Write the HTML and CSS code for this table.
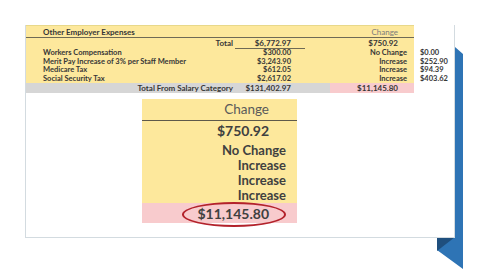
FILE: index.html
```html
<!DOCTYPE html>
<html>
<head>
<meta charset="utf-8">
<link rel="stylesheet" href="styles.css">
</head>
<body>
<div class="page">
  <svg class="ribbon" width="480" height="270" viewBox="0 0 480 270">
    <polygon class="rib-main" points="455,47 463,54 463,269 437,250 437,238 455,238"/>
    <polygon class="rib-dark" points="437,238 455,237 437,251"/>
  </svg>
  <div class="card">
    <div class="top">
      <div class="sheet">
        <div class="row head">
          <span class="lab span3">Other Employer Expenses</span>
          <span class="chg muted">Change</span>
        </div>
        <div class="row total">
          <span class="lab r">Total</span>
          <span class="val ul">$6,772.97</span>
          <span class="gap"></span>
          <span class="chg">$750.92</span>
        </div>
        <div class="row item">
          <span class="lab">Workers Compensation</span>
          <span class="val">$300.00</span>
          <span class="gap"></span>
          <span class="chg st">No Change</span>
        </div>
        <div class="row item">
          <span class="lab">Merit Pay Increase of 3% per Staff Member</span>
          <span class="val">$3,243.90</span>
          <span class="gap"></span>
          <span class="chg st">Increase</span>
        </div>
        <div class="row item">
          <span class="lab">Medicare Tax</span>
          <span class="val">$612.05</span>
          <span class="gap"></span>
          <span class="chg st">Increase</span>
        </div>
        <div class="row item">
          <span class="lab">Social Security Tax</span>
          <span class="val">$2,617.02</span>
          <span class="gap"></span>
          <span class="chg st">Increase</span>
        </div>
        <div class="row sum">
          <span class="lab r grey">Total From Salary Category</span>
          <span class="val grey">$131,402.97</span>
          <span class="gap grey"></span>
          <span class="chg pink">$11,145.80</span>
        </div>
      </div>
      <div class="side">
        <div>$0.00</div>
        <div>$252.90</div>
        <div>$94.39</div>
        <div>$403.62</div>
      </div>
    </div>
    <div class="zoombox">
      <div class="z-head">Change</div>
      <div class="z-amt">$750.92</div>
      <div class="z-list">
        <div>No Change</div>
        <div>Increase</div>
        <div>Increase</div>
        <div>Increase</div>
      </div>
      <div class="z-sum">$11,145.80</div>
      <div class="circle"></div>
    </div>
  </div>
</div>
</body>
</html>
```
FILE: styles.css
```css
html, body {
  margin: 0;
  padding: 0;
  background: #ffffff;
}
body {
  font-family: Lato, "Open Sans", "Liberation Sans", sans-serif;
  color: #363636;
}
.page {
  position: relative;
  width: 480px;
  height: 270px;
  overflow: hidden;
}
.ribbon {
  position: absolute;
  left: 0;
  top: 0;
  z-index: 0;
}
.rib-main { fill: #2e74b5; }
.rib-dark { fill: #1f4f7e; }

.card {
  position: relative;
  z-index: 1;
  margin: 25px 0 0 25px;
  width: 428px;
  height: 212px;
  border: 1px solid #d3dbe0;
  border-top: none;
  background: #ffffff;
}
.top {
  display: flex;
  align-items: flex-start;
}
.sheet {
  width: 388px;
  background: #fde89c;
  font-size: 7.5px;
  font-weight: 700;
}
.row {
  display: flex;
  align-items: stretch;
}
.row span {
  display: block;
  white-space: nowrap;
  box-sizing: border-box;
}
.lab {
  width: 209px;
  padding-left: 17px;
}
.lab.r {
  text-align: right;
  padding-left: 0;
  padding-right: 2px;
}
.lab.span3 {
  width: 304px;
}
.val {
  width: 70px;
  text-align: right;
  padding-right: 14px;
}
.gap { width: 25px; }
.chg {
  width: 84px;
  text-align: right;
  padding-right: 16px;
}
.chg.st { padding-right: 7px; }
.muted {
  color: #7b7b7b;
  font-weight: 400;
}
.head {
  height: 11px;
  line-height: 12px;
  border-top: 1px solid #e8d88a;
  border-bottom: 1px solid #6f6a55;
  font-size: 8px;
}
.total {
  height: 11px;
  line-height: 11px;
  font-size: 8px;
}
.ul { border-bottom: 1px solid #6f6a55; }
.item {
  height: 8.5px;
  line-height: 8.5px;
}
.sum {
  height: 10px;
  line-height: 10px;
  font-size: 8px;
}
.grey { background: #d6d6d6; }
.pink { background: #f8cbcd; }

.side {
  margin: 24px 0 0 6px;
  font-size: 7.5px;
  font-weight: 700;
  line-height: 8.5px;
}

.zoombox {
  position: relative;
  margin: 6px 0 0 116px;
  width: 155px;
  background: #fde89c;
  color: #404040;
  text-align: right;
}
.z-head {
  height: 21px;
  line-height: 21px;
  font-size: 13.5px;
  color: #5a5a5a;
  padding-right: 28px;
  border-bottom: 1px solid #5e594a;
}
.z-amt {
  height: 20px;
  line-height: 20px;
  font-size: 14px;
  font-weight: 700;
  padding-right: 28px;
}
.z-list {
  padding: 2px 11px 0 0;
  font-size: 13px;
  font-weight: 700;
  line-height: 15px;
}
.z-sum {
  height: 20px;
  line-height: 21px;
  font-size: 14px;
  font-weight: 700;
  background: #f8cbcd;
  padding-right: 28px;
}
.circle {
  position: absolute;
  left: 40px;
  top: 103px;
  width: 104px;
  height: 25px;
  box-sizing: border-box;
  border: 2px solid #b3222b;
  border-radius: 50%;
}
```
